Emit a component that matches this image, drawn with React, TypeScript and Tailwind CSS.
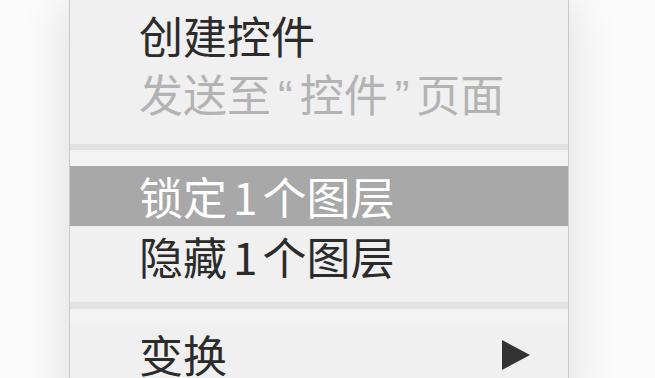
import React from "react";

function Row({ children, variant = "normal", arrow = false }: { children: React.ReactNode; variant?: "normal" | "disabled" | "active"; arrow?: boolean }) {
  const color =
    variant === "disabled" ? "text-[#b3b3b3]" : variant === "active" ? "text-white bg-[#a8a8a8]" : "text-[#2b2b2b]";
  return (
    <div className={`flex h-[60px] items-center justify-between pl-[69px] pr-[38px] text-[44px] leading-[60px] ${color}`}>
      <span className="whitespace-nowrap">{children}</span>
      {arrow && (
        <svg width="28" height="30" viewBox="0 0 28 30" className="mt-[2px]">
          <polygon points="0,0 28,15 0,30" fill="#333333" />
        </svg>
      )}
    </div>
  );
}

const Q = ({ children }: { children: React.ReactNode }) => (
  <span className="mx-[7px]" style={{ fontFamily: '"Liberation Sans", sans-serif' }}>
    {children}
  </span>
);

const One = () => <span className="ml-[6px] mr-[5px]">1</span>;

export default function App() {
  return (
    <div
      className="h-[378px] w-[655px] overflow-hidden bg-[#fbfbfb]"
      style={{ fontFamily: '"Noto Sans CJK SC", "Noto Sans", sans-serif' }}
    >
      <div className="ml-[69px] h-[420px] w-[500px] border-x border-[#c9c9c9] bg-[#f0f0f0] pt-[5px] shadow-[0_0_45px_rgba(0,0,0,0.13)]">
        <Row>创建控件</Row>
        <Row variant="disabled">
          发送至<Q>“</Q>控件<Q>”</Q>页面
        </Row>
        <div className="pt-[19px]">
          <div className="h-[6px] bg-[#e2e2e2]" />
          <div className="h-[16px] bg-[#f3f3f3]" />
        </div>
        <Row variant="active">
          锁定<One />个图层
        </Row>
        <Row>
          隐藏<One />个图层
        </Row>
        <div className="pt-[16px]">
          <div className="h-[7px] bg-[#e2e2e2]" />
          <div className="h-[15px] bg-[#f3f3f3]" />
        </div>
        <Row arrow>变换</Row>
      </div>
    </div>
  );
}
